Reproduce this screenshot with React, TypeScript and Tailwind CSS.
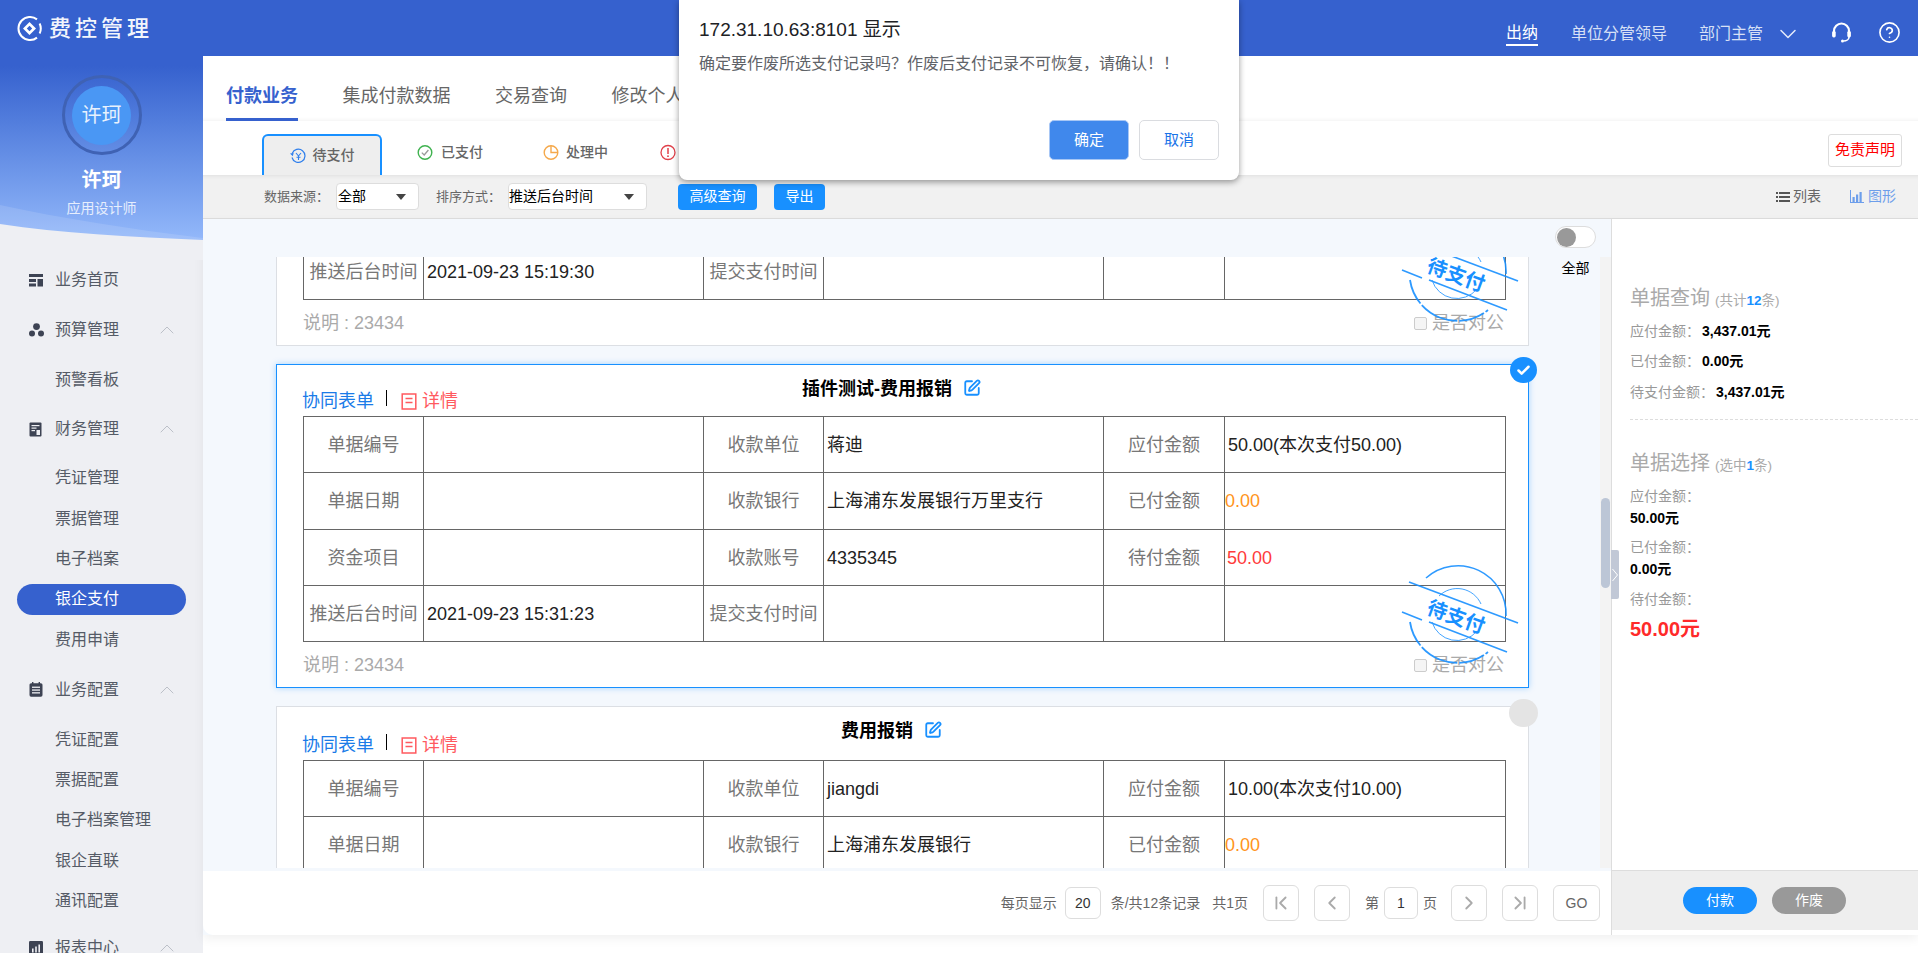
import React from "react";
import { Check, ChevronDown, ChevronFirst, ChevronLast, ChevronLeft, ChevronRight, ChevronUp, CircleHelp, SquarePen } from "lucide-react";

const Logo = () => (
  <svg width="25" height="25" viewBox="0 0 25 25" fill="none">
    <path d="M20 3.4A11.5 11.5 0 1 0 20 21.6" stroke="#fff" strokeWidth="2" />
    <path d="M22.6 7.5A11.5 11.5 0 0 1 22.6 17.5" stroke="#fff" strokeWidth="2" />
    <path d="M12.5 6 L19 12.5 L12.5 19 L6 12.5 Z M12.5 9.8 L9.8 12.5 L12.5 15.2 L15.2 12.5 Z" fill="#fff" fillRule="evenodd" />
  </svg>
);

const Headset = () => (
  <svg width="21" height="21" viewBox="0 0 20 21" fill="none">
    <path d="M2.5 11V9a7.5 7.5 0 0 1 15 0v2" stroke="#fff" strokeWidth="2.2" />
    <rect x="0.6" y="9" width="3.6" height="6.4" rx="1.6" fill="#fff" />
    <rect x="15.8" y="9" width="3.6" height="6.4" rx="1.6" fill="#fff" />
    <path d="M17.5 15c0 2.5-2.5 4-5.5 4" stroke="#fff" strokeWidth="1.6" />
    <circle cx="11" cy="19" r="1.5" fill="#fff" />
  </svg>
);

const IconHome = () => (
  <svg width="14" height="14" viewBox="0 0 14 14" fill="#3d4353">
    <rect x="0" y="1" width="14" height="3" />
    <rect x="0" y="6" width="7" height="3" />
    <rect x="0" y="10.5" width="7" height="3" />
    <rect x="8.5" y="6" width="5.5" height="7.5" />
  </svg>
);
const IconBudget = () => (
  <svg width="15" height="14" viewBox="0 0 15 14" fill="#3d4353">
    <circle cx="7.5" cy="3.6" r="3.4" />
    <circle cx="3" cy="10.6" r="3" />
    <circle cx="12" cy="10.6" r="3" />
  </svg>
);
const IconFinance = () => (
  <svg width="13" height="15" viewBox="0 0 13 15">
    <rect x="0.5" y="0.5" width="12" height="14" rx="1" fill="#3d4353" />
    <rect x="2.5" y="3" width="8" height="1.2" fill="#eeeff3" />
    <rect x="2.5" y="5.5" width="5" height="1.2" fill="#eeeff3" />
    <rect x="2.5" y="8" width="3.5" height="1.2" fill="#eeeff3" />
    <rect x="7.5" y="8" width="3.5" height="5" fill="#eeeff3" />
  </svg>
);
const IconConfig = () => (
  <svg width="14" height="15" viewBox="0 0 14 15">
    <rect x="0.5" y="1.2" width="13" height="13.5" rx="1.6" fill="#3d4353" />
    <rect x="3" y="0" width="1.4" height="2.4" fill="#3d4353" />
    <rect x="9.6" y="0" width="1.4" height="2.4" fill="#3d4353" />
    <rect x="3" y="4.6" width="8" height="1.3" fill="#eeeff3" />
    <rect x="3" y="7.4" width="8" height="1.3" fill="#eeeff3" />
    <rect x="3" y="10.2" width="8" height="1.3" fill="#eeeff3" />
  </svg>
);
const IconReport = () => (
  <svg width="14" height="14" viewBox="0 0 14 14">
    <rect width="14" height="14" rx="1.2" fill="#3d4353" />
    <rect x="3" y="7.5" width="1.6" height="4" fill="#eeeff3" />
    <rect x="6.2" y="5.5" width="1.6" height="6" fill="#eeeff3" />
    <rect x="9.4" y="3.5" width="1.6" height="8" fill="#eeeff3" />
  </svg>
);

const Pending = () => (
  <svg width="16" height="16" viewBox="0 0 16 16" fill="none">
    <path d="M2.2 5.5A6.6 6.6 0 1 1 2 9.5" stroke="#2f7fec" strokeWidth="1.2" />
    <path d="M0 5.6 L3.6 5 L2.8 8.2 Z" fill="#2f7fec" />
    <path d="M6 5 L8.5 8 L11 5 M8.5 8 V12 M6.5 9.2 H10.5" stroke="#2f7fec" strokeWidth="1.1" />
  </svg>
);
const Paid = () => (
  <svg width="16" height="17" viewBox="0 0 16 17" fill="none">
    <circle cx="8" cy="8.5" r="6.8" stroke="#3fb24f" strokeWidth="1.4" />
    <path d="M4.8 8.6 L7.2 11 L11.4 6" stroke="#9a9a9a" strokeWidth="1.3" />
  </svg>
);
const Processing = () => (
  <svg width="16" height="17" viewBox="0 0 16 17" fill="none">
    <circle cx="8" cy="8.5" r="6.8" stroke="#f5a84a" strokeWidth="1.4" />
    <path d="M8 1.7 V8.5 H14.8" stroke="#f5a84a" strokeWidth="1.4" />
  </svg>
);
const Failed = () => (
  <svg width="16" height="17" viewBox="0 0 16 17" fill="none">
    <circle cx="8" cy="8.5" r="7" stroke="#e0404a" strokeWidth="1.3" />
    <path d="M8 4 V10" stroke="#e0404a" strokeWidth="1.5" />
    <circle cx="8" cy="12.2" r="0.9" fill="#e0404a" />
  </svg>
);
const ListIcon = () => (
  <svg width="14" height="12" viewBox="0 0 14 12" fill="#555">
    <rect x="0" y="1" width="2" height="2" />
    <rect x="3" y="1" width="11" height="2" />
    <rect x="0" y="5" width="2" height="2" />
    <rect x="3" y="5" width="11" height="2" />
    <rect x="0" y="9" width="2" height="2" />
    <rect x="3" y="9" width="11" height="2" />
  </svg>
);
const ChartIcon = () => (
  <svg width="14" height="13" viewBox="0 0 14 13" fill="#6d9eeb">
    <rect x="0" y="0" width="1" height="13" />
    <rect x="0" y="12" width="14" height="1" />
    <rect x="2.5" y="7" width="2.2" height="5" />
    <rect x="6" y="4.5" width="2.2" height="7.5" />
    <rect x="9.5" y="2" width="2.2" height="10" />
  </svg>
);
const DocIcon = () => (
  <svg width="16" height="17" viewBox="0 0 16 17" fill="none" stroke="#ff5a5f" strokeWidth="1.5">
    <path d="M1.2 1H14.8V16H1.2Z" />
    <path d="M4.5 5.5H11.5M4.5 9.5H11.5" />
  </svg>
);

const Stamp = () => (
  <div className="absolute left-[1124px] top-[197px] w-[120px] h-[110px] pointer-events-none">
    <svg width="120" height="110" viewBox="0 0 120 110" fill="none" stroke="#1890ff" className="absolute left-0 top-0 opacity-90">
      <path d="M25 16 A48 48 0 0 1 105 54" strokeWidth="1.6" />
      <path d="M9 60 A48 48 0 0 0 87 90" strokeWidth="1.8" strokeDasharray="26 2 40 2" />
      <path d="M38 34 A26 26 0 0 1 80 42" strokeWidth="0.9" />
      <path d="M31 60 A26 26 0 0 0 76 69" strokeWidth="0.9" />
      <path d="M8 20 L117 61" strokeWidth="1.6" />
      <path d="M1 50 L21 58 M28 60 L106 90" strokeWidth="1.6" />
    </svg>
    <div className="absolute left-[25px] top-[43px] w-[60px] text-center text-[20px] leading-[24px] font-bold text-[#1890ff] rotate-[20deg]">待支付</div>
  </div>
);

type Val = { text: string; tone?: string };
type CardData = { title: string; rows: [string, Val, string, Val, string, Val][]; selected?: boolean; stamp?: boolean; head: string };

const Cell = ({ v }: { v: Val }) => (
  <td className={`border border-[#666] pt-[2px] text-[18px] ${v.tone ?? "text-[#222] pl-[3px]"}`}>{v.text}</td>
);
const Label = ({ t }: { t: string }) => (
  <td className="border border-[#666] pt-[2px] text-center text-[18px] text-[#777]">{t}</td>
);

const Card = ({ c }: { c: CardData }) => (
  <div
    className={`relative w-[1253px] bg-white border shrink-0 ${c.selected ? "border-[#1890ff] shadow-[0_0_6px_rgba(24,144,255,0.35)]" : "border-[#dcdfe4]"}`}
  >
    <div className={`grid ${c.head}`}>
      <div className="col-start-1 row-start-1 flex items-end pl-[25px] pb-[3px]">
        <span className="text-[18px] leading-[24px] text-[#1a7be8]">协同表单</span>
        <span className="w-px h-[16px] bg-black ml-[12px] mb-[7px]" />
        <span className="ml-[14px] mb-[3px]">
          <DocIcon />
        </span>
        <span className="ml-[5px] text-[18px] leading-[24px] text-[#ff5a5f]">详情</span>
      </div>
      <div className="col-start-1 row-start-1 flex justify-center items-start pr-[22px] pt-[12px]">
        <span className="text-[18px] leading-[24px] font-bold text-black">{c.title}</span>
        <SquarePen size={18} strokeWidth={2.4} className="ml-[11px] mt-[2px] text-[#1890ff]" />
      </div>
    </div>
    <table className="ml-[26px] w-[1202px] table-fixed border-collapse">
      <colgroup>
        <col className="w-[120px]" />
        <col className="w-[280px]" />
        <col className="w-[120px]" />
        <col className="w-[280px]" />
        <col className="w-[121px]" />
        <col className="w-[281px]" />
      </colgroup>
      <tbody>
        {c.rows.map((r, i) => (
          <tr key={i} className="h-[56.25px]">
            <Label t={r[0]} />
            <Cell v={r[1]} />
            <Label t={r[2]} />
            <Cell v={r[3]} />
            <Label t={r[4]} />
            <Cell v={r[5]} />
          </tr>
        ))}
      </tbody>
    </table>
    <div className="flex items-center justify-between h-[45px] pt-[2px] pl-[26px] pr-[24px] text-[18px] text-[#aaa]">
      <span>说明 : 23434</span>
      <span className="flex items-center">
        <span className="w-[13px] h-[13px] bg-[#f5f5f5] border border-[#ccc] rounded-[2px] mr-[5px]" />
        是否对公
      </span>
    </div>
    {c.stamp && <Stamp />}
    {c.selected ? (
      <div className="absolute right-[-9px] top-[-8px] w-[27px] h-[26px] rounded-full bg-[#1890ff] flex items-center justify-center">
        <Check size={15} strokeWidth={4} className="text-white" />
      </div>
    ) : (
      <div className="absolute right-[-10px] top-[-8px] w-[29px] h-[28px] rounded-full bg-[#e4e4e4]" />
    )}
  </div>
);

const bankRows = (date: string, pay: string, name: string, bank: string, acct: string, left: string): CardData["rows"] => [
  ["单据编号", { text: "" }, "收款单位", { text: name }, "应付金额", { text: pay }],
  ["单据日期", { text: "" }, "收款银行", { text: bank }, "已付金额", { text: "0.00", tone: "text-[#ff9420]" }],
  ["资金项目", { text: "" }, "收款账号", { text: acct }, "待付金额", { text: left, tone: "text-[#ff3b3b] pl-[2px]" }],
  ["推送后台时间", { text: date }, "提交支付时间", { text: "" }, "", { text: "" }],
];

const cards: CardData[] = [
  { title: "费用报销", head: "h-[51px]", stamp: true, rows: bankRows("2021-09-23 15:19:30", "50.00(本次支付50.00)", "蒋迪", "上海浦东发展银行万里支行", "4335345", "50.00") },
  { title: "插件测试-费用报销", head: "h-[51px]", selected: true, stamp: true, rows: bankRows("2021-09-23 15:31:23", "50.00(本次支付50.00)", "蒋迪", "上海浦东发展银行万里支行", "4335345", "50.00") },
  { title: "费用报销", head: "h-[53px]", rows: bankRows("2021-09-23 15:31:23", "10.00(本次支付10.00)", "jiangdi", "上海浦东发展银行", "4335345", "10.00") },
];

const Group = ({ icon, text, className }: { icon: React.ReactNode; text: string; className?: string }) => (
  <div className={`flex items-center h-[40px] pl-[29px] text-[16px] text-[#555b66] ${className ?? ""}`}>
    <span className="w-[26px] flex items-center">{icon}</span>
    <span>{text}</span>
    <ChevronUp size={24} strokeWidth={1} className="ml-auto mr-[24px] text-[#bcc0c8]" />
  </div>
);
const Sub = ({ text, active }: { text: string; active?: boolean }) => (
  <div className={`flex items-center h-[31px] my-[4.65px] mx-[17px] pl-[38px] rounded-full text-[16px] ${active ? "bg-[#3661ce] text-white" : "text-[#555b66]"}`}>
    {text}
  </div>
);

const PageBtn = ({ children, className }: { children: React.ReactNode; className?: string }) => (
  <div className={`w-[36px] h-[36px] flex items-center justify-center rounded-[6px] border border-[#ddd] text-[#aaa] ${className ?? ""}`}>{children}</div>
);
const PageBox = ({ w, children, className }: { w: string; children: React.ReactNode; className?: string }) => (
  <div className={`${w} h-[32px] flex items-center justify-center rounded-[6px] border border-[#ddd] text-[14px] text-[#333] ${className ?? ""}`}>{children}</div>
);

const Stat = ({ label, value, className }: { label: string; value: string; className?: string }) => (
  <div className={`flex items-center h-[30px] text-[14px] ${className ?? ""}`}>
    <span className="text-[#999] w-[72px]">{label}</span>
    <span className="font-bold text-black">{value}</span>
  </div>
);

const COLON = "\uFF1A";
const MESSAGE = "确定要作废所选支付记录吗\uFF1F作废后支付记录不可恢复\uFF0C请确认\uFF01\uFF01";

export default function App() {
  return (
    <div className="relative w-[1918px] h-[953px] overflow-hidden bg-white flex flex-col font-['Liberation_Sans','Noto_Sans_CJK_SC',sans-serif]">
      <header className="h-[56px] shrink-0 bg-[#3661ce] flex items-center pl-[17px] pr-[17px]">
        <Logo />
        <span className="ml-[7px] mt-[1px] text-[22px] leading-[26px] tracking-[4px] font-medium text-[#f2f5fc]">费控管理</span>
        <div className="ml-auto flex items-center pt-[12px] text-[16px] leading-[22px] text-[#d7e0f6]">
          <span className="text-white border-b-2 border-white">出纳</span>
          <span className="ml-[33px]">单位分管领导</span>
          <span className="ml-[32px]">部门主管</span>
          <ChevronDown size={28} strokeWidth={1.3} className="ml-[11px] text-[#e4eafa]" />
          <span className="ml-[29px] mt-[-3px] flex">
            <Headset />
          </span>
          <CircleHelp size={23} strokeWidth={1.7} className="ml-[26px] mt-[-3px] text-white" />
        </div>
      </header>

      <div className="flex flex-1 min-h-0">
        <aside className="w-[203px] shrink-0 bg-[#eeeff3] overflow-hidden">
          <div className="relative h-[204px] bg-gradient-to-b from-[#3661ce] from-[5%] to-[#93b8fa] to-[90%] flex flex-col items-center pt-[19px]">
            <div className="w-[80px] h-[80px] rounded-full border-[3px] border-[#3f62b4] flex items-center justify-center">
              <div className="w-[59px] h-[59px] rounded-full bg-[#4a97f4] flex items-center justify-center text-[20px] text-[#e8f1fd]">许珂</div>
            </div>
            <div className="mt-[12px] text-[20px] leading-[26px] font-bold text-white z-10">许珂</div>
            <div className="mt-[5px] text-[14px] leading-[20px] text-[#e6eefd] z-10">应用设计师</div>
            <svg width="203" height="60" viewBox="0 0 203 60" className="absolute left-0 bottom-0">
              <path d="M0 5 C60 18 130 29 203 38 L203 60 L0 60 Z" fill="#ffffff" fillOpacity="0.12" />
              <path d="M0 24 C60 33 130 37 203 40 L203 60 L0 60 Z" fill="#eeeff3" />
            </svg>
          </div>
          <div className="flex flex-col">
            <div className="flex items-center h-[40px] pl-[29px] text-[16px] text-[#555b66]">
              <span className="w-[26px] flex items-center">
                <IconHome />
              </span>
              <span>业务首页</span>
            </div>
            <Group icon={<IconBudget />} text="预算管理" className="mt-[10px] mb-[10px]" />
            <Sub text="预警看板" />
            <Group icon={<IconFinance />} text="财务管理" className="mt-[9px] mb-[9px]" />
            <Sub text="凭证管理" />
            <Sub text="票据管理" />
            <Sub text="电子档案" />
            <Sub text="银企支付" active />
            <Sub text="费用申请" />
            <Group icon={<IconConfig />} text="业务配置" className="mt-[10px] mb-[10px]" />
            <Sub text="凭证配置" />
            <Sub text="票据配置" />
            <Sub text="电子档案管理" />
            <Sub text="银企直联" />
            <Sub text="通讯配置" />
            <Group icon={<IconReport />} text="报表中心" className="mt-[7px]" />
          </div>
        </aside>

        <main className="flex-1 min-w-0 flex flex-col">
          <div className="h-[65px] shrink-0 flex items-start pl-[23px] gap-x-[44.5px] text-[18px] text-[#666] shadow-[inset_0_-5px_5px_-5px_rgba(0,0,0,0.08)]">
            <span className="h-[65px] pt-[27px] leading-[26px] font-bold text-[#3661ce] border-b-[3px] border-[#3661ce]">付款业务</span>
            <span className="pt-[27px] leading-[26px]">集成付款数据</span>
            <span className="pt-[27px] leading-[26px]">交易查询</span>
            <span className="pt-[27px] leading-[26px]">修改个人</span>
          </div>

          <div className="h-[54px] shrink-0 flex items-end pl-[59px] pr-[16px] text-[14px] text-[#666]">
            <div className="w-[120px] h-[41px] flex items-center justify-center gap-[7px] rounded-t-[6px] border-2 border-b-0 border-[#1890ff] bg-[#eeeeee] font-medium">
              <Pending />
              待支付
            </div>
            <div className="ml-[35px] h-[41px] flex items-center gap-[8px] pb-[4px] font-medium">
              <Paid />
              已支付
            </div>
            <div className="ml-[60px] h-[41px] flex items-center gap-[7px] pb-[4px] font-medium">
              <Processing />
              处理中
            </div>
            <div className="ml-[52px] h-[41px] flex items-center pb-[4px]">
              <Failed />
            </div>
            <div className="ml-auto mb-[8px] w-[74px] h-[33px] flex items-center justify-center rounded-[3px] border border-[#ddd] text-[15px] text-[#ff0000]">免责声明</div>
          </div>

          <div className="h-[44px] shrink-0 flex items-center pl-[61px] pr-[22px] bg-[#f1f1f1] border-b border-[#ddd] text-[13px] text-[#666] shadow-[inset_0_5px_5px_-5px_rgba(0,0,0,0.1)]">
            <span className="w-[72px]">数据来源{COLON}</span>
            <div className="w-[83px] h-[27px] flex items-center justify-between pl-px pr-[12px] bg-white rounded-[4px] border border-[#ddd] text-[14px] text-black">
              全部
              <span className="w-0 h-0 border-x-[5px] border-t-[6px] border-x-transparent border-t-[#444]" />
            </div>
            <span className="w-[72px] ml-[17px]">排序方式{COLON}</span>
            <div className="w-[139px] h-[27px] flex items-center justify-between pl-0 pr-[12px] bg-white rounded-[4px] border border-[#ddd] text-[14px] text-black">
              推送后台时间
              <span className="w-0 h-0 border-x-[5px] border-t-[6px] border-x-transparent border-t-[#444]" />
            </div>
            <div className="ml-[31px] w-[79px] h-[26px] flex items-center justify-center rounded-[4px] bg-[#1890ff] text-[14px] text-white">高级查询</div>
            <div className="ml-[17px] w-[51px] h-[26px] flex items-center justify-center rounded-[4px] bg-[#1890ff] text-[14px] text-white">导出</div>
            <div className="ml-auto flex items-center gap-[3px] text-[14px] text-[#666]">
              <ListIcon />
              列表
            </div>
            <div className="ml-[29px] flex items-center gap-[4px] text-[14px] text-[#6d9eeb]">
              <ChartIcon />
              图形
            </div>
          </div>

          <div className="h-[716px] shrink-0 flex shadow-[0_4px_10px_rgba(0,0,0,0.06)]">
            <div className="relative w-[1408px] shrink-0 flex flex-col bg-[#f4f8fd]">
              <div className="h-[38px] shrink-0" />
              <div className="h-[611px] shrink-0 flex overflow-hidden">
                <div className="w-[1397px] pl-[73px] flex flex-col gap-[18px] mt-[-235px]">
                  {cards.map((c) => (
                    <Card key={c.title + c.rows[0][3].text + (c.selected ? "s" : "")} c={c} />
                  ))}
                </div>
                <div className="w-[11px] shrink-0 bg-[#f3f3f3] pl-px pr-px pt-[241px]">
                  <div className="h-[90px] rounded-full bg-[#bcc6d6]" />
                </div>
              </div>
              <div className="mt-[3px] h-[64px] shrink-0 flex items-center justify-end pr-[11px] bg-white rounded-bl-[10px] text-[14px] text-[#666]">
                <span>每页显示</span>
                <PageBox w="w-[36px]" className="ml-[8px]">20</PageBox>
                <span className="ml-[10px]">条/共12条记录</span>
                <span className="ml-[12px]">共1页</span>
                <PageBtn className="ml-[15px]"><ChevronFirst size={22} strokeWidth={2} /></PageBtn>
                <PageBtn className="ml-[15px]"><ChevronLeft size={22} strokeWidth={2} /></PageBtn>
                <span className="ml-[15px]">第</span>
                <PageBox w="w-[34px]" className="ml-[5px]">1</PageBox>
                <span className="ml-[5px]">页</span>
                <PageBtn className="ml-[14px]"><ChevronRight size={22} strokeWidth={2} /></PageBtn>
                <PageBtn className="ml-[15px]"><ChevronLast size={22} strokeWidth={2} /></PageBtn>
                <div className="ml-[15px] w-[47px] h-[36px] flex items-center justify-center rounded-[6px] border border-[#ddd] text-[14px] text-[#666]">GO</div>
              </div>
              <div className="absolute left-[1352px] top-[7px] flex flex-col items-center">
                <div className="w-[41px] h-[22px] rounded-full border border-[#ddd] bg-white flex items-center pl-px">
                  <span className="w-[19px] h-[19px] rounded-full bg-[#999]" />
                </div>
                <span className="mt-[10px] text-[14px] leading-[20px] text-black">全部</span>
              </div>
              <div className="absolute right-[-8px] top-[331px] z-10 w-[8px] h-[49px] rounded-r-[2px] bg-[#c1c8d6] flex items-center justify-center">
                <svg width="6" height="14" viewBox="0 0 6 14" fill="none" stroke="#fff" strokeWidth="1">
                  <path d="M0.5 1 L5.5 7 L0.5 13" />
                </svg>
              </div>
            </div>

            <div className="flex-1 min-w-0 flex flex-col bg-white border-l border-[#ddd]">
              <div className="h-[651px] shrink-0 pl-[18px] pt-[64px]">
                <div className="flex items-baseline h-[30px] leading-[30px]">
                  <span className="text-[20px] text-[#aaa]">单据查询</span>
                  <span className="ml-[5px] text-[13.5px] text-[#aaa]">(共计<b className="text-[#1890ff]">12</b>条)</span>
                </div>
                <Stat label={`应付金额${COLON}`} value="3,437.01元" className="mt-[3px]" />
                <Stat label={`已付金额${COLON}`} value="0.00元" />
                <Stat label={`待支付金额${COLON}`} value="3,437.01元" className="mt-px [&>span:first-child]:w-[86px]" />
                <div className="mt-[12px] border-t border-dashed border-[#ddd]" />
                <div className="flex items-baseline h-[30px] leading-[30px] mt-[28px]">
                  <span className="text-[20px] text-[#aaa]">单据选择</span>
                  <span className="ml-[5px] text-[13.5px] text-[#aaa]">(选中<b className="text-[#1890ff]">1</b>条)</span>
                </div>
                <div className="mt-[7px] h-[22px] leading-[22px] text-[14px] text-[#999]">应付金额{COLON}</div>
                <div className="h-[22px] leading-[22px] text-[14px] font-bold text-black">50.00元</div>
                <div className="mt-[7px] h-[22px] leading-[22px] text-[14px] text-[#999]">已付金额{COLON}</div>
                <div className="h-[22px] leading-[22px] text-[14px] font-bold text-black">0.00元</div>
                <div className="mt-[8px] h-[22px] leading-[22px] text-[14px] text-[#999]">待付金额{COLON}</div>
                <div className="mt-[4px] h-[30px] leading-[30px] text-[20px] font-bold text-[#ff2a2a]">50.00元</div>
              </div>
              <div className="h-[60px] shrink-0 flex items-center pl-[71px] gap-[15px] bg-[#eeeeee] border-t border-[#ddd] text-[14px] text-white">
                <div className="w-[74px] h-[27px] flex items-center justify-center rounded-full bg-[#1890ff]">付款</div>
                <div className="w-[74px] h-[27px] flex items-center justify-center rounded-full bg-[#999]">作废</div>
              </div>
            </div>
          </div>
        </main>
      </div>

      <div className="absolute left-[679px] top-0 z-20 w-[560px] h-[180px] flex flex-col bg-white rounded-b-[8px] shadow-[0_2px_6px_rgba(0,0,0,0.4)] pl-[20px] pr-[20px]">
        <div className="mt-[15px] h-[30px] leading-[30px] text-[19px] text-[#202124]">172.31.10.63:8101 显示</div>
        <div className="mt-[7px] h-[24px] leading-[24px] text-[16px] text-[#5f6368]">{MESSAGE}</div>
        <div className="mt-[44px] flex justify-end gap-[10px]">
          <div className="w-[80px] h-[40px] flex items-center justify-center rounded-[5px] bg-[#4088ec] border border-[#a8c7f5] text-[15px] text-white">确定</div>
          <div className="w-[80px] h-[40px] flex items-center justify-center rounded-[5px] bg-white border border-[#dadce0] text-[15px] text-[#1a73e8]">取消</div>
        </div>
      </div>
    </div>
  );
}
